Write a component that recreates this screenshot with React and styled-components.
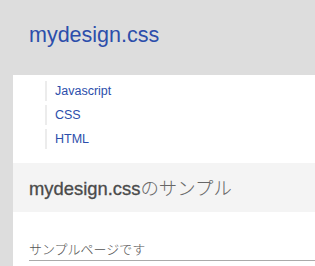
import React from "react";
import styled, { createGlobalStyle } from "styled-components";

const Global = createGlobalStyle`
  html, body { margin: 0; padding: 0; background: #dddddd; }
  body { font-family: "Liberation Sans", Arial, "Noto Sans CJK JP", sans-serif; overflow: hidden; }
  * { box-sizing: border-box; }
`;

const Header = styled.header`
  height: 75px;
  padding: 23px 0 0 29px;
`;

const Title = styled.h1`
  margin: 0;
  font-size: 21.5px;
  line-height: 24px;
  font-weight: normal;
  color: #2c4eab;
`;

const Main = styled.main`
  margin-left: 13px;
  background: #ffffff;
  min-height: 200px;
`;

const Nav = styled.ul`
  list-style: none;
  margin: 0;
  padding: 6px 0 10px 32px;
`;

const NavItem = styled.li`
  border-left: 2px solid #ececec;
  padding-left: 8px;
  height: 20px;
  line-height: 20px;
  margin-bottom: 4px;
  font-size: 12.5px;
  color: #2c4eab;
`;

const Heading = styled.h2`
  margin: 0;
  background: #f4f4f4;
  height: 49px;
  line-height: 49px;
  padding-left: 16px;
  font-size: 18.4px;
  font-weight: normal;
  color: #555555;
  white-space: nowrap;
`;

const Latin = styled.span`
  color: #4a4a4a;
  -webkit-text-stroke: 0.3px #4a4a4a;
`;

const Jp = styled.span`
  font-family: "Noto Sans CJK JP", sans-serif;
  font-weight: 300;
  color: #666666;
`;

const Content = styled.section`
  padding: 27px 0 0 16px;
`;

const Para = styled.p`
  margin: 0;
  font-family: "Noto Sans CJK JP", sans-serif;
  font-weight: 300;
  font-size: 13px;
  line-height: 20px;
  color: #555555;
  padding-bottom: 1px;
  border-bottom: 1px solid #aaaaaa;
`;

export default function App() {
  return (
    <>
      <Global />
      <Header>
        <Title>mydesign.css</Title>
      </Header>
      <Main>
        <Nav>
          <NavItem>Javascript</NavItem>
          <NavItem>CSS</NavItem>
          <NavItem>HTML</NavItem>
        </Nav>
        <Heading>
          <Latin>mydesign.css</Latin>
          <Jp>のサンプル</Jp>
        </Heading>
        <Content>
          <Para>サンプルページです</Para>
        </Content>
      </Main>
    </>
  );
}
